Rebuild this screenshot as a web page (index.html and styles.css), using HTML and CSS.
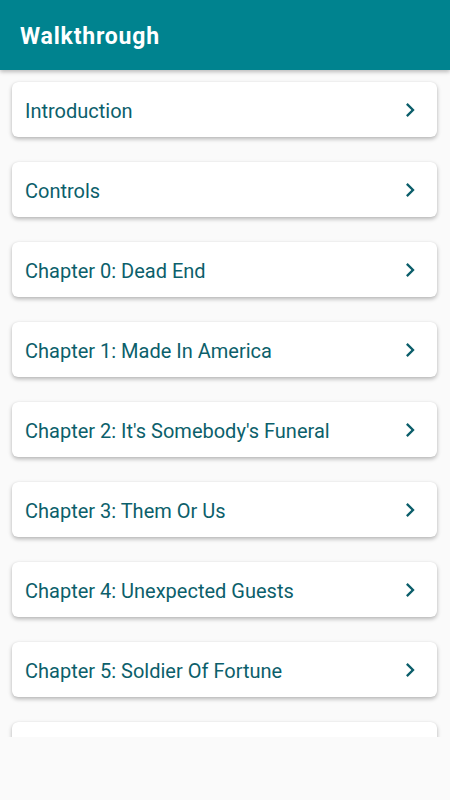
FILE: index.html
```html
<!DOCTYPE html>
<html lang="en">
<head>
  <meta charset="UTF-8">
  <title>Walkthrough</title>
  <link rel="stylesheet" href="styles.css">
</head>
<body>
<div id="appbar">
  <h1>Walkthrough</h1>
</div>
<div id="list">
  <div class="card"><span>Introduction</span><svg class="chev" viewBox="0 0 24 24"><path d="M10 6L8.59 7.41 13.17 12l-4.58 4.59L10 18l6-6z"/></svg></div>
  <div class="card"><span>Controls</span><svg class="chev" viewBox="0 0 24 24"><path d="M10 6L8.59 7.41 13.17 12l-4.58 4.59L10 18l6-6z"/></svg></div>
  <div class="card"><span>Chapter 0: Dead End</span><svg class="chev" viewBox="0 0 24 24"><path d="M10 6L8.59 7.41 13.17 12l-4.58 4.59L10 18l6-6z"/></svg></div>
  <div class="card"><span>Chapter 1: Made In America</span><svg class="chev" viewBox="0 0 24 24"><path d="M10 6L8.59 7.41 13.17 12l-4.58 4.59L10 18l6-6z"/></svg></div>
  <div class="card"><span>Chapter 2: It's Somebody's Funeral</span><svg class="chev" viewBox="0 0 24 24"><path d="M10 6L8.59 7.41 13.17 12l-4.58 4.59L10 18l6-6z"/></svg></div>
  <div class="card"><span>Chapter 3: Them Or Us</span><svg class="chev" viewBox="0 0 24 24"><path d="M10 6L8.59 7.41 13.17 12l-4.58 4.59L10 18l6-6z"/></svg></div>
  <div class="card"><span>Chapter 4: Unexpected Guests</span><svg class="chev" viewBox="0 0 24 24"><path d="M10 6L8.59 7.41 13.17 12l-4.58 4.59L10 18l6-6z"/></svg></div>
  <div class="card"><span>Chapter 5: Soldier Of Fortune</span><svg class="chev" viewBox="0 0 24 24"><path d="M10 6L8.59 7.41 13.17 12l-4.58 4.59L10 18l6-6z"/></svg></div>
  <div class="card"></div>
</div>
</body>
</html>
```

FILE: styles.css
```css
html, body {
  margin: 0;
  height: 100%;
}
body {
  font-family: Roboto, "Noto Sans", sans-serif;
  background: #fafafa;
  overflow: hidden;
}
#appbar {
  position: relative;
  z-index: 2;
  height: 70px;
  background: #00838f;
  box-shadow: 0 2px 4px rgba(0, 0, 0, 0.25);
  display: flex;
  align-items: center;
  padding: 0 20px;
}
#appbar h1 {
  margin: 0;
  color: #fff;
  font-size: 23px;
  font-weight: 700;
  letter-spacing: 0.8px;
  padding-top: 2px;
}
#list {
  height: 667px;
  overflow: hidden;
  padding: 12px 13px 0 12px;
  box-sizing: border-box;
}
.card {
  height: 55px;
  margin-bottom: 25px;
  background: #fff;
  border-radius: 6px;
  box-shadow: 0 2px 4px rgba(0, 0, 0, 0.28), 0 0 1px rgba(0, 0, 0, 0.1);
  display: flex;
  align-items: center;
  justify-content: space-between;
  padding: 0 13px 0 13px;
}
.card span {
  color: #0c5f6b;
  font-size: 20px;
  padding-top: 2px;
}
.chev {
  width: 28px;
  height: 28px;
  fill: #0c5f6b;
}
```
